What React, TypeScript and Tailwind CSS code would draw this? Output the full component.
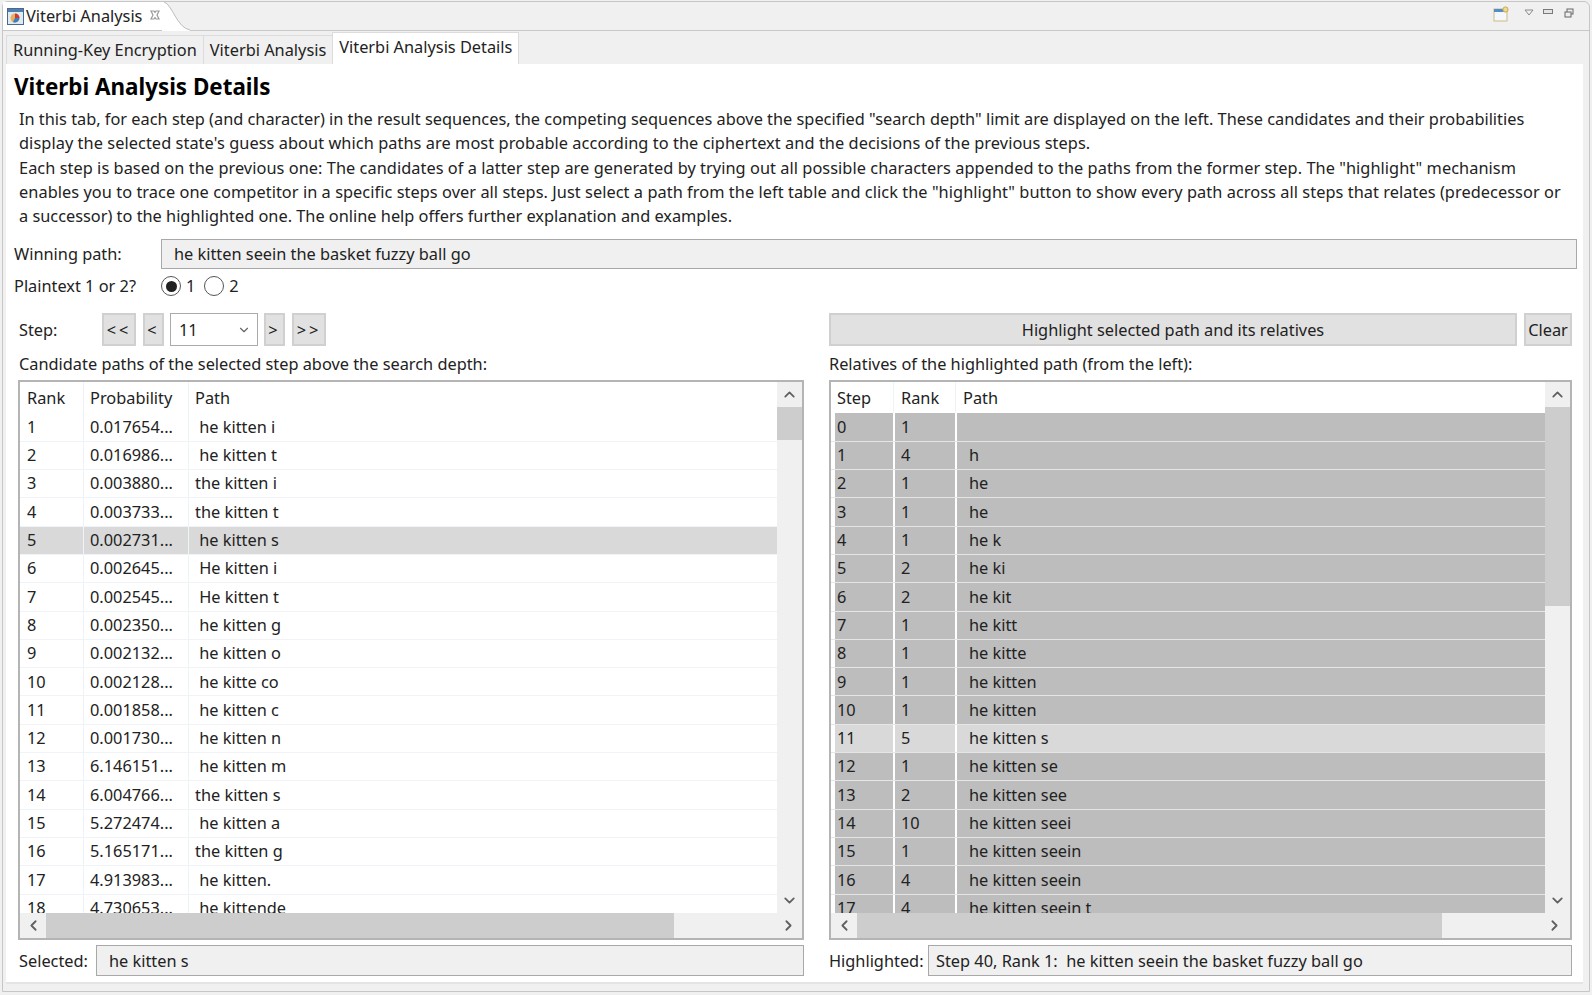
import React from 'react';
import { ChevronDown, ChevronLeft, ChevronRight, ChevronUp } from 'lucide-react';

const CANDIDATES: [string, string, string][] = [
  ['1', '0.017654...', ' he kitten i'],
  ['2', '0.016986...', ' he kitten t'],
  ['3', '0.003880...', 'the kitten i'],
  ['4', '0.003733...', 'the kitten t'],
  ['5', '0.002731...', ' he kitten s'],
  ['6', '0.002645...', ' He kitten i'],
  ['7', '0.002545...', ' He kitten t'],
  ['8', '0.002350...', ' he kitten g'],
  ['9', '0.002132...', ' he kitten o'],
  ['10', '0.002128...', ' he kitte co'],
  ['11', '0.001858...', ' he kitten c'],
  ['12', '0.001730...', ' he kitten n'],
  ['13', '6.146151...', ' he kitten m'],
  ['14', '6.004766...', 'the kitten s'],
  ['15', '5.272474...', ' he kitten a'],
  ['16', '5.165171...', 'the kitten g'],
  ['17', '4.913983...', ' he kitten.'],
  ['18', '4.730653...', ' he kittende'],
];

const RELATIVES: [string, string, string][] = [
  ['0', '1', ''],
  ['1', '4', 'h'],
  ['2', '1', 'he'],
  ['3', '1', 'he'],
  ['4', '1', 'he k'],
  ['5', '2', 'he ki'],
  ['6', '2', 'he kit'],
  ['7', '1', 'he kitt'],
  ['8', '1', 'he kitte'],
  ['9', '1', 'he kitten'],
  ['10', '1', 'he kitten'],
  ['11', '5', 'he kitten s'],
  ['12', '1', 'he kitten se'],
  ['13', '2', 'he kitten see'],
  ['14', '10', 'he kitten seei'],
  ['15', '1', 'he kitten seein'],
  ['16', '4', 'he kitten seein'],
  ['17', '4', 'he kitten seein t'],
];

const NavButton = ({ label, width }: { label: string; width: string }) => (
  <button className={`h-[33px] ${width} bg-[#e1e1e1] border-2 border-[#d0d0d0] tracking-[3px] flex items-center justify-center`}>
    {label}
  </button>
);

const ReadOnlyField = ({ value, className }: { value: string; className: string }) => (
  <div className={`bg-[#f0f0f0] border border-[#a8a8a8] flex items-center whitespace-pre ${className}`}>{value}</div>
);

const Radio = ({ checked }: { checked?: boolean }) => (
  <span className="w-[20px] h-[20px] rounded-full border border-[#555] bg-white flex items-center justify-center">
    {checked && <span className="w-[11px] h-[11px] rounded-full bg-[#222]" />}
  </span>
);

const Scrollbars = ({
  children,
  thumbHeight,
  thumbWidth,
  trailing,
}: {
  children: React.ReactNode;
  thumbHeight: string;
  thumbWidth: string;
  trailing: string;
}) => (
  <div className="h-[560px] border-2 border-[#b4b4b4] bg-white flex flex-col">
    <div className="flex h-[531px]">
      <div className="flex-1 overflow-hidden">{children}</div>
      <div className="w-[25px] bg-[#f0f0f0] flex flex-col shrink-0">
        <div className="h-[25px] flex items-center justify-center text-[#606060]">
          <ChevronUp size={17} strokeWidth={2.5} />
        </div>
        <div className={`${thumbHeight} bg-[#cdcdcd]`} />
        <div className="flex-1" />
        <div className="h-[25px] flex items-center justify-center text-[#606060]">
          <ChevronDown size={17} strokeWidth={2.5} />
        </div>
      </div>
    </div>
    <div className="h-[25px] bg-[#f0f0f0] flex items-center">
      <div className="w-[26px] flex justify-center text-[#606060] shrink-0">
        <ChevronLeft size={17} strokeWidth={2.5} />
      </div>
      <div className={`h-full ${thumbWidth} bg-[#cdcdcd]`} />
      <div className="flex-1" />
      <div className={`${trailing} flex justify-center text-[#606060] shrink-0`}>
        <ChevronRight size={17} strokeWidth={2.5} />
      </div>
    </div>
  </div>
);

export default function App() {
  return (
    <div className="w-[1592px] h-[995px] bg-[#f0f0f0] font-['Noto_Sans',sans-serif] text-[16.33px] text-[#222] overflow-hidden">
      <div className="mx-[2px] mt-[1px] h-[991px] border border-[#c6c6c6] rounded-t-[6px] flex flex-col">
        {/* view tab */}
        <div className="h-[29px] flex items-stretch border-b border-[#c8c8c8] relative shrink-0">
          <div className="w-[160px] bg-white flex items-center pl-[4px] gap-[2px] relative whitespace-nowrap">
            <svg width="17" height="17" viewBox="0 0 17 17" className="shrink-0">
              <rect x="0.5" y="0.5" width="16" height="16" fill="#dfe9f3" stroke="#4a6a8c" />
              <rect x="1" y="1" width="15" height="3" fill="#4f7fae" />
              <circle cx="8" cy="10" r="4.5" fill="#e8b05a" />
              <path d="M8 10 L8 5.5 A4.5 4.5 0 0 1 12.5 10 Z" fill="#c93a3a" />
              <path d="M8 10 L12.5 10 A4.5 4.5 0 0 1 6 14 Z" fill="#3f7fc0" />
            </svg>
            <span>Viterbi Analysis</span>
            <svg width="12" height="12" viewBox="0 0 12 12" className="ml-[5px] mb-[3px] shrink-0" fill="none" stroke="#9a9a9a" strokeWidth="1.2">
              <path d="M2 2 L5 2 L6 3.5 L7 2 L10 2 L8 6 L10 10 L7 10 L6 8.5 L5 10 L2 10 L4 6 Z" />
            </svg>
          </div>
          <svg width="28" height="29" viewBox="0 0 28 29" className="-ml-px shrink-0">
            <path d="M0 0 H2 C10 2 15 26 28 28 V29 H0 Z" fill="#fff" />
            <path d="M2 0 C10 2 15 26 28 28" stroke="#bdbdbd" fill="none" />
          </svg>
          <div className="flex-1 flex items-center justify-end pr-[15px] pb-[3px]">
            <svg width="16" height="16" viewBox="0 0 16 16" className="mr-[15px] mb-[2px]">
              <rect x="1" y="3" width="13" height="12" fill="#f4f8fc" stroke="#cdbb80" />
              <rect x="1" y="3" width="13" height="3" fill="#4f8fd0" />
              <circle cx="12.5" cy="3.5" r="2.6" fill="#f0d890" stroke="#c8a850" />
            </svg>
            <svg width="10" height="8" viewBox="0 0 10 8" className="mr-[9px] mb-[4px]" fill="none" stroke="#8a8a8a">
              <path d="M1 1 H9 L5 6 Z" />
            </svg>
            <div className="w-[10px] h-[5px] mr-[11px] mb-[6px] border border-[#7a7a7a] bg-[#e4e4e4]" />
            <svg width="10" height="10" viewBox="0 0 10 10" className="mb-[3px]" fill="none" stroke="#666">
              <rect x="3" y="1" width="6" height="5" />
              <rect x="1" y="4" width="6" height="5" fill="#eee" />
            </svg>
          </div>
        </div>

        {/* folder tabs */}
        <div className="h-[33px] flex items-end pl-[3px] pr-[7px] shrink-0">
          <div className="h-[29px] px-[6px] flex items-center bg-[#f0f0f0] border-t border-l border-[#dcdcdc]">Running-Key Encryption</div>
          <div className="h-[29px] px-[6px] flex items-center bg-[#f0f0f0] border-t border-l border-[#dcdcdc]">Viterbi Analysis</div>
          <div className="h-[32px] px-[6px] pb-[3px] flex items-center bg-white border-t border-x border-[#dcdcdc]">Viterbi Analysis Details</div>
        </div>

        {/* tab content */}
        <div className="flex-1 mx-[3px] mr-[6px] mb-[7px] bg-white pl-[8px] pr-[6px] flex flex-col border-b-2 border-[#e4e4e4]">
          <h1 className="h-[46px] flex items-center text-[22.4px] font-bold text-black">Viterbi Analysis Details</h1>
          <div className="pl-[5px] leading-[24.3px] -mt-[3px] whitespace-nowrap">
            <p>In this tab, for each step (and character) in the result sequences, the competing sequences above the specified "search depth" limit are displayed on the left. These candidates and their probabilities</p>
            <p className="tracking-[0.065px]">display the selected state's guess about which paths are most probable according to the ciphertext and the decisions of the previous steps.</p>
            <p className="tracking-[0.05px]">Each step is based on the previous one: The candidates of a latter step are generated by trying out all possible characters appended to the paths from the former step. The "highlight" mechanism</p>
            <p className="tracking-[0.057px]">enables you to trace one competitor in a specific steps over all steps. Just select a path from the left table and click the "highlight" button to show every path across all steps that relates (predecessor or</p>
            <p>a successor) to the highlighted one. The online help offers further explanation and examples.</p>
          </div>

          <div className="flex items-center h-[31px] mt-[10px]">
            <span className="w-[147px]">Winning path:</span>
            <ReadOnlyField value="he kitten seein the basket fuzzy ball go" className="h-[30px] flex-1 pl-[12px]" />
          </div>
          <div className="flex items-center h-[30px] mt-[2px]">
            <span className="w-[147px]">Plaintext 1 or 2?</span>
            <Radio checked />
            <span className="ml-[5px]">1</span>
            <span className="ml-[9px]"><Radio /></span>
            <span className="ml-[5px]">2</span>
          </div>

          <div className="flex gap-[25px] pl-[4px] pr-[5px] mt-[12px] flex-1 min-h-0">
            {/* left column */}
            <div className="w-[786px] flex flex-col shrink-0">
              <div className="flex items-center h-[33px]">
                <span className="w-[84px] pl-[1px]">Step:</span>
                <NavButton label="<<" width="w-[34px]" />
                <span className="w-[7px]" />
                <NavButton label="<" width="w-[21px]" />
                <div className="h-[33px] w-[88px] ml-[6px] border border-[#aaa] flex items-center pl-[8px] justify-between pr-[6px]">
                  11
                  <ChevronDown size={14} className="text-[#666]" />
                </div>
                <span className="w-[6px]" />
                <NavButton label=">" width="w-[21px]" />
                <span className="w-[7px]" />
                <NavButton label=">>" width="w-[34px]" />
              </div>
              <div className="h-[33px] mt-[1px] flex items-center pl-[1px]">Candidate paths of the selected step above the search depth:</div>
              <Scrollbars thumbHeight="h-[33px]" thumbWidth="w-[628px]" trailing="w-[104px] pl-[76px]">
                <div className="h-[31px] flex items-center">
                  <span className="w-[64px] pl-[7px] h-full flex items-center border-r border-[#eef3f8]">Rank</span>
                  <span className="w-[105px] pl-[6px] h-full flex items-center border-r border-[#eef3f8]">Probability</span>
                  <span className="pl-[6px]">Path</span>
                </div>
                {CANDIDATES.map(([rank, prob, path]) => (
                  <div key={rank} className={`h-[28.3px] flex items-center border-b border-[#f0f4f8] ${rank === '5' ? 'bg-[#d9d9d9]' : ''}`}>
                    <span className="w-[64px] pl-[7px] h-full flex items-center border-r border-[#eef3f8]">{rank}</span>
                    <span className="w-[105px] pl-[6px] h-full flex items-center border-r border-[#eef3f8]">{prob}</span>
                    <span className="pl-[6px] whitespace-pre">{path}</span>
                  </div>
                ))}
              </Scrollbars>
              <div className="flex items-center mt-[5px]">
                <span className="w-[78px] pl-[1px]">Selected:</span>
                <ReadOnlyField value="he kitten s" className="h-[31px] flex-1 pl-[12px]" />
              </div>
            </div>

            {/* right column */}
            <div className="flex-1 min-w-0 flex flex-col">
              <div className="flex items-center h-[33px] gap-[7px]">
                <button className="flex-1 h-[33px] bg-[#e1e1e1] border-2 border-[#d0d0d0]">Highlight selected path and its relatives</button>
                <button className="w-[48px] h-[33px] bg-[#e1e1e1] border-2 border-[#d0d0d0]">Clear</button>
              </div>
              <div className="h-[33px] mt-[1px] flex items-center">Relatives of the highlighted path (from the left):</div>
              <Scrollbars thumbHeight="h-[199px]" thumbWidth="w-[585px]" trailing="w-[104px] pl-[72px]">
                <div className="h-[31px] flex items-center">
                  <span className="w-[63px] pl-[6px] h-full flex items-center border-r border-[#eef3f8]">Step</span>
                  <span className="w-[62px] pl-[7px] h-full flex items-center border-r border-[#eef3f8]">Rank</span>
                  <span className="pl-[7px]">Path</span>
                </div>
                {RELATIVES.map(([step, rank, path]) => {
                  const cell = step === '11' ? 'bg-[#d9d9d9]' : 'bg-[#bdbdbd]';
                  return (
                    <div key={step} className="h-[28.3px] flex items-stretch pl-[4px] border-b border-[#e6e6e6]">
                      <span className={`w-[58px] pl-[2px] flex items-center ${cell}`}>{step}</span>
                      <span className={`w-[60px] ml-[2px] pl-[6px] flex items-center ${cell}`}>{rank}</span>
                      <span className={`flex-1 ml-[2px] pl-[12px] flex items-center ${cell}`}>{path}</span>
                    </div>
                  );
                })}
              </Scrollbars>
              <div className="flex items-center mt-[5px]">
                <span className="w-[99px]">Highlighted:</span>
                <ReadOnlyField value="Step 40, Rank 1:  he kitten seein the basket fuzzy ball go" className="h-[31px] flex-1 pl-[7px]" />
              </div>
            </div>
          </div>
        </div>
      </div>
    </div>
  );
}
